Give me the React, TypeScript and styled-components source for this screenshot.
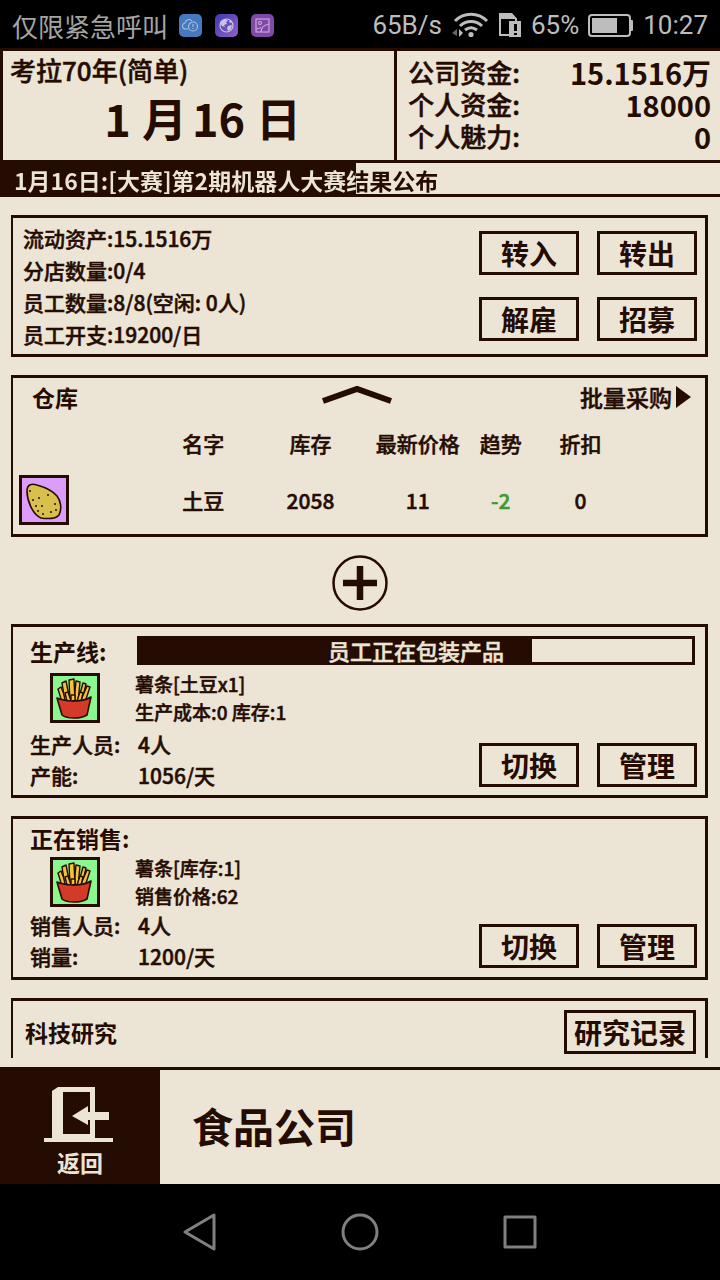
import React from "react";
import styled, { createGlobalStyle } from "styled-components";

const ink = "#250c02";
const paper = "#ece5d5";

const GlobalStyle = createGlobalStyle`
  *, *::before, *::after { box-sizing: border-box; }
  body { margin: 0; background: #000; }
  p, dl, dd, h1, h2 { margin: 0; }
  button { font: inherit; color: inherit; background: none; border: 0; padding: 0; cursor: pointer; }
  svg { display: block; flex: none; }
`;

const Screen = styled.div`
  display: flex;
  flex-direction: column;
  min-height: 100vh;
  color: ${ink};
  background: ${paper};
  font-family: "Noto Sans CJK SC", sans-serif;
  font-weight: 500;
  font-size: 21px;
  -webkit-text-stroke: 0.5px;
`;

/* System status bar */
const StatusBar = styled.header`
  display: flex;
  justify-content: space-between;
  align-items: center;
  height: 48px;
  padding: 2px 12px 0;
  background: #000;
  color: #bdbdbd;
  font-family: Roboto, "Noto Sans CJK SC", sans-serif;
  font-weight: 400;
  font-size: 26px;
  -webkit-text-stroke: 0;
`;

const StatusGroup = styled.div`
  display: flex;
  align-items: center;
  gap: 9px;
`;

const Carrier = styled.span`
  margin-right: 2px;
  color: #a4a4a4;
`;

const AppBadge = styled.span<{ $fill: string }>`
  display: grid;
  place-items: center;
  width: 23px;
  height: 23px;
  margin-right: 4px;
  border-radius: 5px;
  background: ${(p) => p.$fill};
`;

/* Date and funds */
const Summary = styled.section`
  display: flex;
  height: 115px;
  border: solid ${ink};
  border-width: 3px 0 3px 3px;
`;

const DateBox = styled.div`
  flex: 0 0 calc(55% - 3px);
  padding: 1px 7px 0;
`;

const SaveName = styled.p`
  font-size: 26px;
  line-height: 36px;
`;

const DateLine = styled.h1`
  display: flex;
  justify-content: center;
  gap: 11px;
  padding-left: 8px;
  font-size: 45px;
  font-weight: 700;
  line-height: 60px;
  -webkit-text-stroke: 0;
`;

const MonthMark = styled.span`
  margin-right: 5px;
`;

const Funds = styled.dl`
  flex: 1;
  border-left: 3px solid ${ink};
  padding: 5px 9px 0 11px;
`;

const FundRow = styled.div`
  display: flex;
  justify-content: space-between;
  font-size: 26px;
  line-height: 32px;
  dd { font-size: 29px; font-weight: 700; -webkit-text-stroke: 0; }
`;

const Ticker = styled.div`
  height: 34px;
  border-bottom: 3px solid ${ink};
  background: linear-gradient(to right, ${ink} 356px, transparent 356px);
`;

const TickerText = styled.p`
  padding-left: 14px;
  font-size: 23px;
  font-weight: 700;
  line-height: 34px;
  white-space: nowrap;
  color: transparent;
  background: linear-gradient(to right, ${paper} 356px, ${ink} 356px);
  background-clip: text;
  -webkit-background-clip: text;
  -webkit-text-stroke: 0;
`;

/* Scrolling list of panels */
const Main = styled.main`
  flex: 1 0 auto;
  display: flex;
  flex-direction: column;
  padding: 18px 12px 9px 11px;
`;

const Panel = styled.section<{ $open?: boolean }>`
  border: 3px solid ${ink};
  border-left-width: 2px;
  margin-bottom: ${(p) => (p.$open ? 0 : 18)}px;
  ${(p) => p.$open && "border-bottom: 0; flex: 1;"}
`;

const CompanyPanel = styled(Panel)`
  display: flex;
  justify-content: space-between;
  padding: 4px 8px 4px 10px;
`;

const InfoList = styled.div`
  line-height: 32px;
`;

const ButtonGrid = styled.div`
  display: grid;
  grid-template-columns: 100px 100px;
  gap: 22px 18px;
  align-content: center;
`;

const ActionButton = styled.button`
  height: 44px;
  min-width: 100px;
  padding: 0 7px;
  border: 3px solid ${ink};
  font-size: 28px;
  font-weight: 700;
  line-height: 36px;
  -webkit-text-stroke: 0;
`;

const SectionTitle = styled.h2`
  font-size: 23px;
  font-weight: 700;
  line-height: 30px;
  -webkit-text-stroke: 0;
`;

const StoreHead = styled.div`
  display: grid;
  grid-template-columns: 1fr auto 1fr;
  align-items: center;
  padding: 4px 14px 0 19px;
`;

const FoldButton = styled.button`
  margin-right: 10px;
`;

const BulkButton = styled.button`
  display: flex;
  align-items: center;
  justify-self: end;
  gap: 4px;
  font-size: 23px;
  line-height: 30px;
`;

const StoreTable = styled.table`
  width: 100%;
  table-layout: fixed;
  border-collapse: collapse;
  text-align: center;
  th, td { padding: 0; white-space: nowrap; }
  th { height: 53px; padding-top: 8px; font-weight: 500; }
  td { height: 69px; }
`;

const Falling = styled.td`
  color: #3f9a35;
`;

const Tile = styled.span<{ $fill: string }>`
  display: block;
  width: 50px;
  height: 50px;
  border: 3px solid ${ink};
  background: ${(p) => p.$fill};
`;

const StoreTile = styled(Tile)`
  margin-left: 6px;
`;

const AddButton = styled.button`
  align-self: center;
  margin-bottom: 13px;
`;

const LinePanel = styled(Panel)<{ $dense?: boolean }>`
  padding: ${(p) => (p.$dense ? 4 : 9)}px 8px 0 17px;
`;

const LineHead = styled.div<{ $dense?: boolean }>`
  display: flex;
  align-items: center;
  height: 29px;
  margin-bottom: ${(p) => (p.$dense ? 2 : 5)}px;
`;

const LineTitle = styled(SectionTitle)`
  flex: none;
  min-width: 107px;
`;

const Progress = styled.div`
  flex: 1;
  display: grid;
  height: 29px;
  margin-right: 2px;
  border: 3px solid ${ink};
`;

const ProgressFill = styled.div`
  grid-area: 1 / 1;
  background: ${ink};
`;

const ProgressLabel = styled.span`
  grid-area: 1 / 1;
  text-align: center;
  color: ${paper};
  font-size: 22px;
  line-height: 22px;
`;

const ItemRow = styled.div`
  display: flex;
  align-items: center;
  gap: 35px;
  padding-left: 20px;
  font-size: 19px;
  line-height: 28px;
`;

const LineFoot = styled.div<{ $dense?: boolean }>`
  display: flex;
  justify-content: space-between;
  align-items: flex-end;
  padding: ${(p) => (p.$dense ? "0 0 5px" : "3px 0 4px")};
`;

const Stats = styled.dl`
  display: grid;
  grid-template-columns: 108px auto;
  line-height: 31px;
  dd { white-space: nowrap; }
`;

const LineButtons = styled.div`
  display: flex;
  gap: 18px;
  padding-bottom: 4px;
`;

const ResearchHead = styled.div`
  display: flex;
  justify-content: space-between;
  align-items: center;
  padding: 9px 9px 4px 12px;
`;

/* Footer */
const Footer = styled.footer`
  display: flex;
  height: 117px;
  border-top: 3px solid ${ink};
`;

const BackButton = styled.button`
  display: flex;
  flex-direction: column;
  align-items: center;
  width: 160px;
  padding-top: 16px;
  background: ${ink};
  color: ${paper};
  font-size: 23px;
  font-weight: 700;
  line-height: 38px;
  -webkit-text-stroke: 0;
`;

const CompanyName = styled.h2`
  align-self: center;
  padding: 0 0 5px 32px;
  font-size: 41px;
  font-weight: 700;
  line-height: 56px;
  -webkit-text-stroke: 0;
`;

const NavBar = styled.nav`
  display: flex;
  justify-content: center;
  align-items: center;
  gap: 120px;
  height: 96px;
  background: #000;
`;

const outline = { fill: "none", stroke: "#808080", strokeWidth: 3, strokeLinejoin: "round" as const };

function FriesIcon() {
  return (
    <svg width="44" height="44" viewBox="0 0 44 44" stroke={ink} strokeLinejoin="round">
      <g fill="#f3c43a" strokeWidth="1.4">
        <path d="M5 13l3-2 6 15h-5z" />
        <path d="M9 7l4-2 4 20h-5z" />
        <path d="M30 7l3 1-4 17h-4z" />
        <path d="M34 10l3 1-5 15-4-2z" />
        <path d="M23 5l4 1-2 20h-4z" />
        <path d="M16 4l5-1 1 23h-5z" />
        <path d="M12 17l3-1 3 9h-4z" />
        <path d="M27 16l3 1-2 8h-4z" />
        <path d="M18 19h4v6h-4z" />
      </g>
      <path d="M4 22c9 4 26 4 34-1l-4 18c-6 4-20 4-25 0z" fill="#d43a28" strokeWidth="1.6" />
    </svg>
  );
}

function PotatoIcon() {
  const spots = [[8, 13], [11, 22], [17, 20], [14, 28], [20, 28], [26, 17], [33, 26], [16, 33], [21, 36], [29, 34], [34, 32]];
  return (
    <svg width="44" height="44" viewBox="0 0 44 44">
      <path
        d="M5 13C5 7 9 5 15 7C22 9 31 13 35 18C39 23 40 31 37 37C34 41 25 41 19 40C10 36 5 22 5 13Z"
        fill="#d9bf4c"
        stroke={ink}
        strokeWidth="1.6"
      />
      {spots.map(([x, y]) => (
        <circle key={`${x}-${y}`} cx={x} cy={y} r="1" fill={ink} />
      ))}
    </svg>
  );
}

function CloudAlertIcon() {
  return (
    <svg width="17" height="15" viewBox="0 0 17 15" fill="none" stroke="#a9c3e4" strokeWidth="1.1">
      <path d="M6 11H4a3 3 0 0 1-1-6 4 4 0 0 1 7-2" />
      <circle cx="11" cy="8.500" r="4.500" />
      <path d="M11 6v3M11 10v1" />
    </svg>
  );
}

function GlobeIcon() {
  return (
    <svg width="17" height="17" viewBox="0 0 17 17">
      <circle cx="8.500" cy="8.500" r="6.500" fill="none" stroke="#c9c4e4" strokeWidth="1.2" />
      <path d="M3 4l5-2 2 2-2 1 1 2-3 1 1 2-3-1-2-3zM10 9l4-1-1 4-3 2-1-3zM12 3l2 2-1 1-2-1z" fill="#c9c4e4" />
    </svg>
  );
}

function PictureIcon() {
  return (
    <svg width="17" height="17" viewBox="0 0 17 17" fill="none" stroke="#cfaedd" strokeWidth="1.1">
      <rect x="2" y="2" width="13" height="13" />
      <circle cx="6" cy="6" r="1.500" />
      <path d="M2 12c3 0 4-2 5-1M7 15c0-5 3-7 8-8" />
    </svg>
  );
}

function WifiIcon() {
  return (
    <svg width="38" height="26" viewBox="0 0 38 26" fill="none" stroke="#bdbdbd" strokeWidth="3">
      <path d="M4 9C13 0 27 0 36 9" />
      <path d="M9 14c6-6 16-6 22 0" />
      <path d="M14 18c4-3 8-3 12 0" />
      <circle cx="20" cy="22.500" r="2.600" fill="#bdbdbd" stroke="none" />
      <path d="M8 17v8l4-4z" fill="#bdbdbd" stroke="none" />
      <path d="M6 17v7l-5-3z" fill="#666" stroke="none" />
    </svg>
  );
}

function SimIcon() {
  return (
    <svg width="24" height="26" viewBox="0 0 24 26">
      <path d="M11 23H2V2h11l5 5v3" fill="none" stroke="#bdbdbd" strokeWidth="2" />
      <path d="M1 1h13l5 6H1z" fill="#bdbdbd" />
      <path d="M11 9h12v16H11z" fill="#bdbdbd" />
      <path d="M16 12h3v7h-3zM16 21h3v2h-3z" fill="#000" />
    </svg>
  );
}

function BatteryIcon() {
  return (
    <svg width="46" height="23" viewBox="0 0 46 23">
      <rect x="1" y="1" width="41" height="21" rx="3" fill="none" stroke="#bdbdbd" strokeWidth="2" />
      <rect x="4" y="4" width="25" height="15" fill="#bdbdbd" />
      <path d="M42 6h2q1 0 1 1v9q0 1-1 1h-2z" fill="#bdbdbd" />
    </svg>
  );
}

function DoorIcon() {
  return (
    <svg width="73" height="57" viewBox="0 0 73 57" fill={paper}>
      <path d="M8 5L14 1H51V52H69V56H0V52H8ZM19 6V48H46V6Z" fillRule="evenodd" />
      <path d="M28 30L44 20V26H65V34H44V39Z" />
    </svg>
  );
}

type LineProps = {
  title: string;
  progress?: { label: string; percent: number };
  lines: string[];
  stats: [string, string][];
};

function BusinessLine({ title, progress, lines, stats }: LineProps) {
  const dense = !progress;
  return (
    <LinePanel $dense={dense}>
      <LineHead $dense={dense}>
        <LineTitle>{title}</LineTitle>
        {progress && (
          <Progress role="progressbar" aria-label={progress.label} aria-valuenow={progress.percent}>
            <ProgressFill style={{ width: `${progress.percent}%` }} />
            <ProgressLabel>{progress.label}</ProgressLabel>
          </Progress>
        )}
      </LineHead>
      <ItemRow>
        <Tile $fill="#8df78f"><FriesIcon /></Tile>
        <div>{lines.map((line) => <p key={line}>{line}</p>)}</div>
      </ItemRow>
      <LineFoot $dense={dense}>
        <Stats>
          {stats.map(([name, value]) => (
            <React.Fragment key={name}>
              <dt>{name}</dt>
              <dd>{value}</dd>
            </React.Fragment>
          ))}
        </Stats>
        <LineButtons>
          <ActionButton type="button">切换</ActionButton>
          <ActionButton type="button">管理</ActionButton>
        </LineButtons>
      </LineFoot>
    </LinePanel>
  );
}

export default function App() {
  return (
    <Screen>
      <GlobalStyle />
      <StatusBar>
        <StatusGroup>
          <Carrier>仅限紧急呼叫</Carrier>
          <AppBadge $fill="#4679bd"><CloudAlertIcon /></AppBadge>
          <AppBadge $fill="linear-gradient(135deg, #4038b4, #9162c4)"><GlobeIcon /></AppBadge>
          <AppBadge $fill="#8049a8"><PictureIcon /></AppBadge>
        </StatusGroup>
        <StatusGroup>
          <span>65B/s</span>
          <WifiIcon />
          <SimIcon />
          <span>65%</span>
          <BatteryIcon />
          <span>10:27</span>
        </StatusGroup>
      </StatusBar>

      <Summary>
        <DateBox>
          <SaveName>考拉70年(简单)</SaveName>
          <DateLine>
            <span>1</span>
            <span><MonthMark>月</MonthMark>16</span>
            <span>日</span>
          </DateLine>
        </DateBox>
        <Funds>
          <FundRow><dt>公司资金:</dt><dd>15.1516万</dd></FundRow>
          <FundRow><dt>个人资金:</dt><dd>18000</dd></FundRow>
          <FundRow><dt>个人魅力:</dt><dd>0</dd></FundRow>
        </Funds>
      </Summary>
      <Ticker>
        <TickerText>1月16日:[大赛]第2期机器人大赛结果公布</TickerText>
      </Ticker>

      <Main>
        <CompanyPanel>
          <InfoList>
            <p>流动资产:15.1516万</p>
            <p>分店数量:0/4</p>
            <p>员工数量:8/8(空闲: 0人)</p>
            <p>员工开支:19200/日</p>
          </InfoList>
          <ButtonGrid>
            <ActionButton type="button">转入</ActionButton>
            <ActionButton type="button">转出</ActionButton>
            <ActionButton type="button">解雇</ActionButton>
            <ActionButton type="button">招募</ActionButton>
          </ButtonGrid>
        </CompanyPanel>

        <Panel>
          <StoreHead>
            <SectionTitle>仓库</SectionTitle>
            <FoldButton type="button" aria-label="收起">
              <svg width="70" height="24" viewBox="0 0 70 24">
                <path d="M1 16L35 4L69 16" fill="none" stroke={ink} strokeWidth="6" />
              </svg>
            </FoldButton>
            <BulkButton type="button">
              批量采购
              <svg width="15" height="22" viewBox="0 0 15 22"><path d="M0 0L15 11L0 22Z" fill={ink} /></svg>
            </BulkButton>
          </StoreHead>
          <StoreTable>
            <colgroup>
              <col style={{ width: "20%" }} />
              <col style={{ width: "15%" }} />
              <col style={{ width: "16%" }} />
              <col style={{ width: "15%" }} />
              <col style={{ width: "9%" }} />
              <col style={{ width: "14%" }} />
              <col />
            </colgroup>
            <thead>
              <tr><th /><th>名字</th><th>库存</th><th>最新价格</th><th>趋势</th><th>折扣</th><th /></tr>
            </thead>
            <tbody>
              <tr>
                <td><StoreTile $fill="#dc9dfa"><PotatoIcon /></StoreTile></td>
                <td>土豆</td>
                <td>2058</td>
                <td>11</td>
                <Falling>-2</Falling>
                <td>0</td>
                <td />
              </tr>
            </tbody>
          </StoreTable>
        </Panel>

        <AddButton type="button" aria-label="添加">
          <svg width="56" height="56" viewBox="0 0 56 56" fill="none" stroke={ink}>
            <circle cx="28" cy="28" r="26.500" strokeWidth="2.500" />
            <path d="M11 28H45M28 11V45" strokeWidth="6.500" />
          </svg>
        </AddButton>

        <BusinessLine
          title="生产线:"
          progress={{ label: "员工正在包装产品", percent: 71 }}
          lines={["薯条[土豆x1]", "生产成本:0 库存:1"]}
          stats={[["生产人员:", "4人"], ["产能:", "1056/天"]]}
        />
        <BusinessLine
          title="正在销售:"
          lines={["薯条[库存:1]", "销售价格:62"]}
          stats={[["销售人员:", "4人"], ["销量:", "1200/天"]]}
        />

        <Panel $open>
          <ResearchHead>
            <SectionTitle>科技研究</SectionTitle>
            <ActionButton type="button">研究记录</ActionButton>
          </ResearchHead>
        </Panel>
      </Main>

      <Footer>
        <BackButton type="button">
          <DoorIcon />
          返回
        </BackButton>
        <CompanyName>食品公司</CompanyName>
      </Footer>
      <NavBar>
        <button type="button" aria-label="后退">
          <svg width="40" height="40" viewBox="0 0 40 40" {...outline}><path d="M5 20L34 3V37Z" /></svg>
        </button>
        <button type="button" aria-label="主页">
          <svg width="40" height="40" viewBox="0 0 40 40" {...outline}><circle cx="20" cy="20" r="17" /></svg>
        </button>
        <button type="button" aria-label="最近任务">
          <svg width="40" height="40" viewBox="0 0 40 40" {...outline}><rect x="5" y="5" width="30" height="30" /></svg>
        </button>
      </NavBar>
    </Screen>
  );
}
